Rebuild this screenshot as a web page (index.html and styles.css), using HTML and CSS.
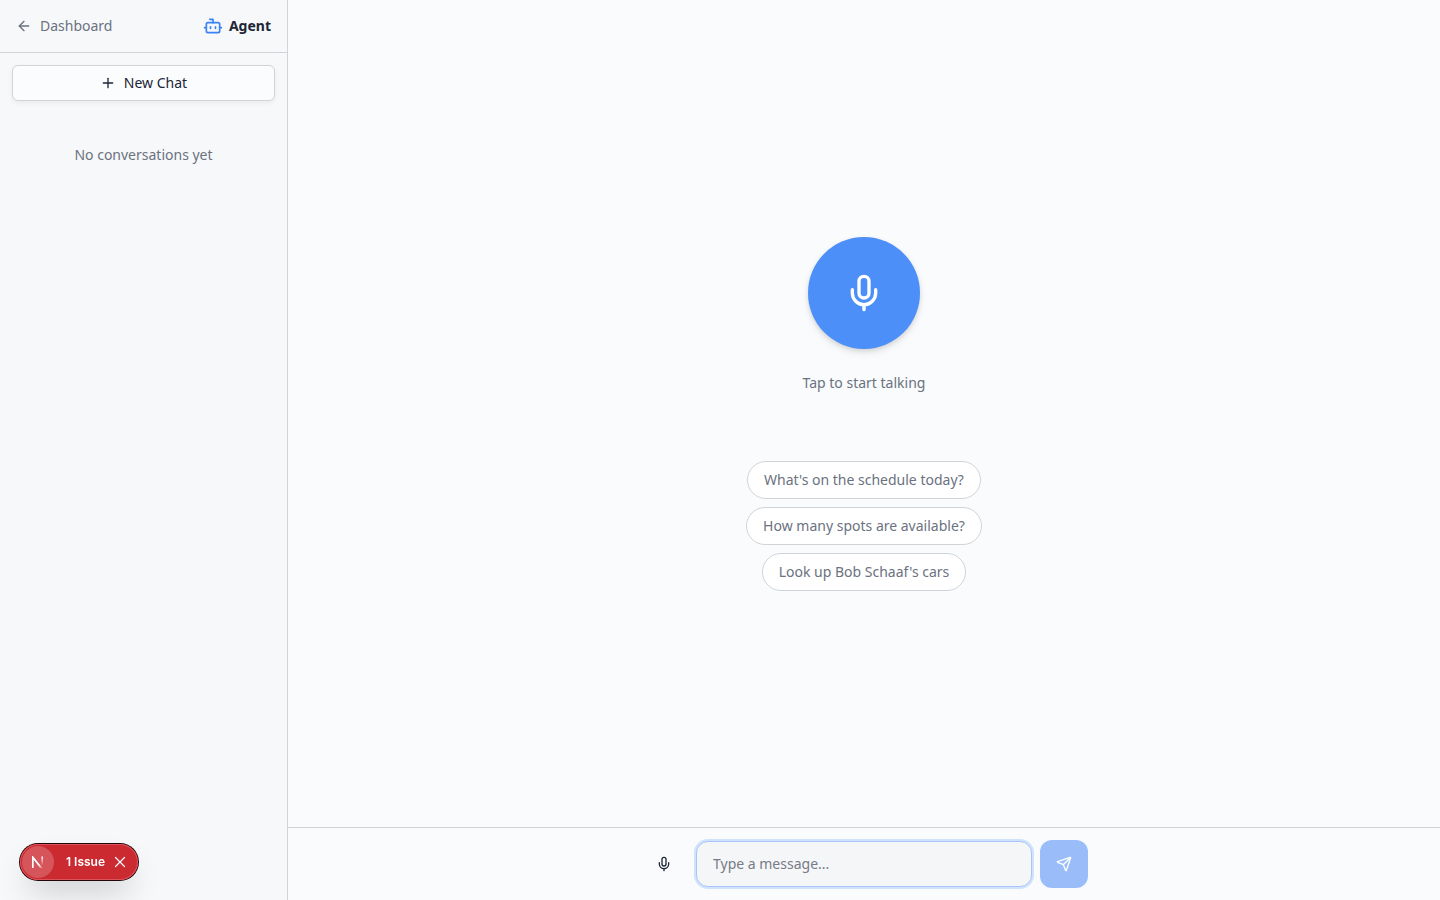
FILE: index.html
```html
<!DOCTYPE html>
<html lang="en">
<head>
<meta charset="utf-8">
<meta name="viewport" content="width=device-width, initial-scale=1">
<title>Agent</title>
<link rel="stylesheet" href="styles.css">
</head>
<body>
<div class="app">
  <aside class="sidebar">
    <header class="sidebar-header">
      <a class="back-link" href="#">
        <svg class="icon icon-sm" viewBox="0 0 24 24" aria-hidden="true"><path d="m12 19-7-7 7-7"/><path d="M19 12H5"/></svg>
        Dashboard
      </a>
      <div class="brand">
        <svg class="icon icon-md brand-icon" viewBox="0 0 24 24" aria-hidden="true"><path d="M12 8V4H8"/><rect width="16" height="12" x="4" y="8" rx="2"/><path d="M2 14h2"/><path d="M20 14h2"/><path d="M15 13v2"/><path d="M9 13v2"/></svg>
        Agent
      </div>
    </header>
    <div class="sidebar-actions">
      <button class="new-chat" type="button">
        <svg class="icon icon-sm" viewBox="0 0 24 24" aria-hidden="true"><path d="M5 12h14"/><path d="M12 5v14"/></svg>
        New Chat
      </button>
    </div>
    <p class="empty">No conversations yet</p>
  </aside>

  <main class="main">
    <section class="welcome">
      <button class="talk" type="button" aria-label="Start talking">
        <svg class="icon icon-lg" viewBox="0 0 24 24" aria-hidden="true"><path d="M12 19v3"/><path d="M19 10v2a7 7 0 0 1-14 0v-2"/><rect x="9" y="2" width="6" height="13" rx="3"/></svg>
      </button>
      <p class="hint">Tap to start talking</p>
      <div class="suggestions">
        <button class="suggestion" type="button">What's on the schedule today?</button>
        <button class="suggestion" type="button">How many spots are available?</button>
        <button class="suggestion" type="button">Look up Bob Schaaf's cars</button>
      </div>
    </section>
    <footer class="composer">
      <form class="composer-form">
        <button class="mic" type="button" aria-label="Voice input">
          <svg class="icon icon-sm" viewBox="0 0 24 24" aria-hidden="true"><path d="M12 19v3"/><path d="M19 10v2a7 7 0 0 1-14 0v-2"/><rect x="9" y="2" width="6" height="13" rx="3"/></svg>
        </button>
        <input class="message" type="text" placeholder="Type a message..." aria-label="Message">
        <button class="send" type="submit" aria-label="Send" disabled>
          <svg class="icon icon-sm" viewBox="0 0 24 24" aria-hidden="true"><path d="M14.536 21.686a.5.5 0 0 0 .937-.024l6.5-19a.496.496 0 0 0-.635-.635l-19 6.5a.5.5 0 0 0-.024.937l7.93 3.18a2 2 0 0 1 1.112 1.11z"/><path d="m21.854 2.147-10.94 10.939"/></svg>
        </button>
      </form>
    </footer>
  </main>
</div>

<div class="issues">
  <button class="issues-logo" type="button" aria-label="Open dev tools">
    <svg class="next-mark" viewBox="0 0 12 12" fill="none" aria-hidden="true">
      <defs>
        <linearGradient id="mark-stem" x1="10" y1="0" x2="10" y2="12" gradientUnits="userSpaceOnUse"><stop stop-color="#fff"/><stop offset="0.8" stop-color="#fff" stop-opacity="0"/></linearGradient>
        <linearGradient id="mark-diagonal" x1="5" y1="5" x2="11" y2="13" gradientUnits="userSpaceOnUse"><stop offset="0.4" stop-color="#fff"/><stop offset="1" stop-color="#fff" stop-opacity="0"/></linearGradient>
      </defs>
      <path d="M0.8 12V1.2L9.6 12.4" stroke="url(#mark-diagonal)" stroke-width="1.7"/>
      <path d="M9.4 0.4h1.6v11.2H9.4z" fill="url(#mark-stem)"/>
    </svg>
  </button>
  <button class="issues-open" type="button">1 Issue</button>
  <button class="issues-close" type="button" aria-label="Close">
    <svg class="close-icon" viewBox="0 0 12 12" aria-hidden="true"><path d="M1.5 1.5l9 9M10.5 1.5l-9 9"/></svg>
  </button>
</div>
</body>
</html>
```
FILE: styles.css
```css
* {
  box-sizing: border-box;
}

body {
  margin: 0;
  background: #f9fbfd;
  color: #1e2536;
  font: 14px/20px "Noto Sans", sans-serif;
}

button,
input {
  margin: 0;
  padding: 0;
  border: 0;
  background: none;
  color: inherit;
  font: inherit;
}

button {
  cursor: pointer;
}

p {
  margin: 0;
}

.icon {
  flex: none;
  fill: none;
  stroke: currentColor;
  stroke-width: 2;
  stroke-linecap: round;
  stroke-linejoin: round;
}

.icon-sm {
  width: 16px;
  height: 16px;
}

.icon-md {
  width: 20px;
  height: 20px;
}

.icon-lg {
  width: 40px;
  height: 40px;
}

.app {
  display: flex;
  min-height: 100vh;
}

.sidebar {
  flex: none;
  width: 288px;
  border-right: 1px solid #d0d4d9;
  background: #f6f8fa;
}

.sidebar-header {
  display: flex;
  align-items: center;
  justify-content: space-between;
  padding: 16px;
  border-bottom: 1px solid #d0d4d9;
}

.back-link {
  display: flex;
  align-items: center;
  gap: 8px;
  color: #6b7280;
  text-decoration: none;
}

.brand {
  display: flex;
  align-items: center;
  gap: 6px;
  font-weight: 700;
}

.brand-icon {
  color: #3b82f6;
}

.sidebar-actions {
  padding: 12px;
}

.new-chat {
  display: flex;
  align-items: center;
  justify-content: center;
  gap: 8px;
  width: 100%;
  height: 36px;
  border: 1px solid #d0d4d9;
  border-radius: 6px;
  background: #fafcfe;
  box-shadow: 0 2px 5px rgb(0 0 0 / 6%);
}

.empty {
  padding: 32px 16px;
  color: #6b7280;
  text-align: center;
}

.main {
  display: flex;
  flex: 1;
  flex-direction: column;
  min-width: 0;
}

.welcome {
  display: flex;
  flex: 1;
  flex-direction: column;
  align-items: center;
  justify-content: center;
}

.talk {
  display: flex;
  align-items: center;
  justify-content: center;
  width: 112px;
  height: 112px;
  border-radius: 50%;
  background: #4d8ff8;
  box-shadow: 0 2px 4px rgb(0 0 0 / 10%), 0 4px 8px rgb(0 0 0 / 8%);
  color: #fff;
}

.hint {
  margin-top: 24px;
  color: #6b7280;
}

.suggestions {
  display: flex;
  flex-direction: column;
  align-items: center;
  gap: 8px;
  margin-top: 68px;
}

.suggestion {
  padding: 8px 16px;
  border: 1px solid #d0d4d9;
  border-radius: 20px;
  background: #fff;
  color: #6b7280;
}

.composer {
  padding: 12px;
  border-top: 1px solid #d0d4d9;
}

.composer-form {
  display: flex;
  align-items: center;
  gap: 8px;
  max-width: 448px;
  margin: 0 auto;
}

.mic,
.send {
  display: flex;
  flex: none;
  align-items: center;
  justify-content: center;
  width: 48px;
  height: 48px;
  border-radius: 12px;
}

.send {
  background: #9abdf9;
  color: #fff;
}

.message {
  flex: 1;
  min-width: 0;
  height: 46px;
  padding: 11px 16px 13px;
  border: 1px solid #a6c5f8;
  border-radius: 12px;
  outline: 0;
  background: #f5f6f8;
  box-shadow: 0 0 0 2px #d1e2fc;
}

.message::placeholder {
  color: #757b87;
  opacity: 1;
}

.issues {
  position: fixed;
  bottom: 20px;
  left: 20px;
  display: flex;
  align-items: center;
  height: 36px;
  padding: 0 8px 0 2px;
  border-radius: 18px;
  background: #ca2a30;
  box-shadow: 0 0 0 1px #21070a, inset 0 0 0 1px #dc5459, 0 16px 32px -8px rgb(0 0 0 / 24%);
  color: #fff;
  font: 600 12px/16px Inter, sans-serif;
}

.issues-logo {
  display: flex;
  align-items: center;
  justify-content: center;
  width: 32px;
  height: 32px;
  border-radius: 50%;
  background: #d5555a;
}

.next-mark {
  width: 12px;
  height: 12px;
}

.issues-open {
  margin-left: 12px;
}

.issues-close {
  display: flex;
  align-items: center;
  justify-content: center;
  width: 20px;
  height: 20px;
  margin-left: 5px;
}

.close-icon {
  width: 12px;
  height: 12px;
  fill: none;
  stroke: #fff;
  stroke-width: 1.2;
  stroke-linecap: round;
}
```
